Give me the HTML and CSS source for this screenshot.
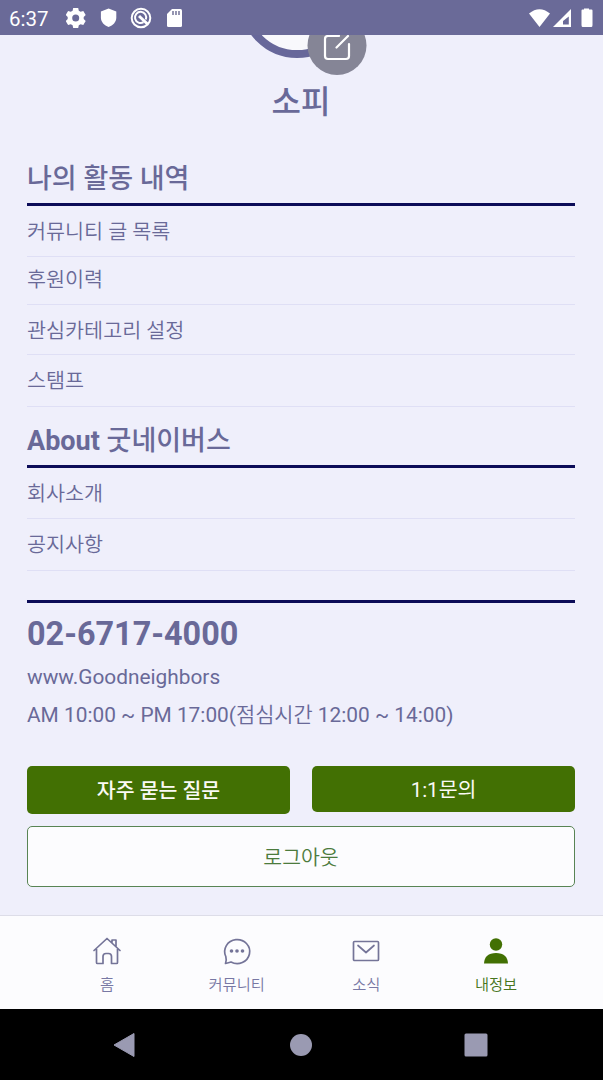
FILE: index.html
```
<!DOCTYPE html>
<html lang="ko">
<head>
<meta charset="utf-8">
<title>내정보</title>
<link rel="stylesheet" href="styles.css">
</head>
<body>
<div class="screen">
  <header class="status">
    <span class="clock">6:37</span>
    <svg class="s-left" width="118" height="22" viewBox="0 0 118 22">
      <g fill="#fff">
        <path fill-rule="evenodd" d="M7.2 1h5l.6 2.8 1.8 1 2.7-.9 2.4 4.1-2 1.9v2.2l2 1.9-2.4 4.1-2.7-.9-1.8 1-.6 2.8h-5l-.6-2.8-1.8-1-2.7.9-2.4-4.1 2-1.9V9.900l-2-1.900 2.400-4.100 2.700.9 1.800-1zM9.700 7.500a3.500 3.500 0 1 0 0 7a3.500 3.500 0 1 0 0-7z"/>
        <path d="M42.600 1.500l7.700 3v6c0 4.500-3.300 8-7.700 9.500c-4.400-1.500-7.700-5-7.700-9.500v-6z"/>
        <path d="M106 2h8.500q1.500 0 1.500 1.500v15q0 1.500-1.500 1.500h-12q-1.500 0-1.500-1.500V7z"/>
      </g>
      <g fill="none" stroke="#fff" stroke-width="2">
        <circle cx="75" cy="11" r="9.300"/><path d="M77.500 15.200A5.600 5.600 0 1 1 79.800 12.500"/>
        <path d="M73 9l8.500 8" stroke-width="3"/>
      </g>
      <path d="M107 4v4M110 4v4M113 4v4" stroke="#6a6a91" stroke-width="1.400"/>
    </svg>
    <svg class="s-right" width="66" height="20" viewBox="0 0 66 20">
      <path fill="#fff" d="M1 5.500Q11.500-3 22 5.500L11.500 19zM61 1.500v-1h-5v1h-1.500q-1 0-1 1V17q0 2 1 2h9q1 0 1-2V2.500q0-1-1-1z"/>
      <path fill="#fff" fill-rule="evenodd" d="M25 19L43 1v18zM35 16.500h5.800V8.500L35 13z"/>
    </svg>
  </header>

  <main class="content">
    <section class="profile">
      <svg class="avatar" width="160" height="44" viewBox="0 0 160 44">
        <circle cx="67" cy="-34" r="53" fill="#f8f8fc" stroke="#67679a" stroke-width="8"/>
        <circle cx="107" cy="10.500" r="29.500" fill="#858596"/>
        <g fill="none" stroke="#fff" stroke-width="2.200" stroke-linecap="round" stroke-linejoin="round">
          <path d="M109 1H98q-3 0-3 3v17q0 3 3 3h18q3 0 3-3V9M106.500 12.500L118 1"/>
        </g>
      </svg>
      <h1 class="name">소피</h1>
    </section>

    <section class="group">
      <h2 class="title">나의 활동 내역</h2>
      <ul class="list">
        <li class="row r1">커뮤니티 글 목록</li>
        <li class="row r2">후원이력</li>
        <li class="row r3">관심카테고리 설정</li>
        <li class="row r4">스탬프</li>
      </ul>
    </section>
    <section class="group second">
      <h2 class="title"><b>About</b> 굿네이버스</h2>
      <ul class="list">
        <li class="row r1">회사소개</li>
        <li class="row r4">공지사항</li>
      </ul>
    </section>

    <section class="contact">
      <p class="phone">02-6717-4000</p>
      <p class="line">www.Goodneighbors</p>
      <p class="line">AM 10:00 ~ PM 17:00(<span class="ko">점심시간</span> 12:00 ~ 14:00)</p>
    </section>

    <div class="actions">
      <button class="btn faq">자주 묻는 질문</button>
      <button class="btn ask">1:1문의</button>
      <button class="btn logout">로그아웃</button>
    </div>
  </main>

  <nav class="tabs">
    <a class="tab"><svg width="30" height="30" viewBox="0 0 30 30" fill="none" stroke="#747498" stroke-width="1.700" stroke-linejoin="round" stroke-linecap="round"><path d="M2 14.500L15 2.500l13 12M4.500 13v13.500q0 1 1 1h5.500v-7q0-3 3-3h2.500q3 0 3 3v7h5q1 0 1-1V13M20 6.500V4h4v6.500"/></svg><span>홈</span></a>
    <a class="tab"><svg width="30" height="30" viewBox="0 0 30 30" fill="none" stroke="#747498" stroke-width="1.700" stroke-linejoin="round"><path d="M3.800 20.500A12.500 12 0 1 1 9 26Q6.500 26.800 3.500 27.500Q4.800 24 3.800 20.500z"/><g fill="#747498" stroke="none"><circle cx="9.500" cy="15" r="1.800"/><circle cx="15" cy="15" r="1.800"/><circle cx="20.500" cy="15" r="1.800"/></g></svg><span>커뮤니티</span></a>
    <a class="tab"><svg width="30" height="30" viewBox="0 0 30 30" fill="none" stroke="#747498" stroke-width="1.700" stroke-linejoin="round" stroke-linecap="round"><rect x="2.500" y="5.500" width="25" height="19" rx="1"/><path d="M7 9.500l8 7 8-7"/></svg><span>소식</span></a>
    <a class="tab active"><svg width="30" height="30" viewBox="0 0 30 30" fill="#427003"><circle cx="15" cy="8.500" r="6.200"/><path d="M3 27.500Q3.500 17 15 17t12 10.500z"/></svg><span>내정보</span></a>
  </nav>
  <footer class="system">
    <svg width="24" height="26" viewBox="0 0 24 26"><path d="M2 13L22 1.500v23z" fill="#9a9ab2" stroke="#9a9ab2" stroke-linejoin="round"/></svg>
    <svg width="24" height="26" viewBox="0 0 24 26"><circle cx="13" cy="13" r="11" fill="#9a9ab2"/></svg>
    <svg width="24" height="26" viewBox="0 0 24 26"><rect x=".5" y="1.500" width="23" height="23" rx="1.500" fill="#9a9ab2"/></svg>
  </footer>
</div>
</body>
</html>
```
FILE: styles.css
```
* { box-sizing: border-box; margin: 0; padding: 0; }
body { font-family: Roboto, "Noto Sans CJK KR", sans-serif; color: #696998; background: #efeffb; }
.screen { width: 603px; height: 1080px; display: flex; flex-direction: column; overflow: hidden; }

.status { height: 35px; flex: none; background: #6a6a98; color: #fff; display: flex; align-items: center; padding: 1px 9px 0; }
.clock { width: 57px; font-size: 20.500px; line-height: 34px; padding-top: 1px; }
.s-right { margin-left: auto; }

.content { flex: 1; padding: 0 28px 0 27px; }
.profile { height: 107px; display: flex; flex-direction: column; align-items: center; }
.avatar { display: block; flex: none; margin-left: 17px; }
.name { font-size: 32px; line-height: 44px; font-weight: 500; padding-top: 1px; }

.title { height: 64px; padding-top: 18px; border-bottom: 3px solid #0c0c58; font-size: 27px; line-height: 39px; font-weight: 500; white-space: nowrap; }
.title b { font-weight: 700; }
.second .title { height: 61px; padding-top: 15px; }
.list { list-style: none; }
.row { display: flex; align-items: center; border-bottom: 1px solid #dfdff5; font-size: 20.700px; font-weight: 350; padding-bottom: 2px; }
.r1 { height: 51px; }
.r2 { height: 48px; padding-bottom: 5px; }
.r3 { height: 50px; }
.r4 { height: 52px; padding-bottom: 3px; }

.contact { margin-top: 29px; border-top: 3px solid #0c0c58; padding-top: 11px; }
.phone { font-size: 32.400px; line-height: 40px; font-weight: 700; }
.line { font-size: 20.850px; line-height: 30px; margin-top: 8px; white-space: nowrap; }
.ko { font-weight: 350; }

.actions { display: grid; grid-template-columns: 1fr 1fr; column-gap: 22px; row-gap: 12px; align-items: start; margin-top: 36px; }
.btn { font: 500 20.500px/28px Roboto, "Noto Sans CJK KR", sans-serif; border: 0; border-radius: 5px; color: #fafaf5; background: #427003; padding-top: 2px; }
.faq { height: 48px; }
.ask { height: 46px; font-weight: 400; }
.logout { grid-column: 1 / -1; height: 61px; background: #fcfcfe; color: #4c7b3d; border: 1.500px solid #588454; font-weight: 350; }

.tabs { height: 94px; flex: none; display: flex; justify-content: center; background: #fcfcfe; border-top: 1px solid #dddde8; }
.tab { width: 129.700px; display: flex; flex-direction: column; align-items: center; padding-top: 20px; font-size: 15.300px; line-height: 22px; font-weight: 350; color: #7878a4; }
.tab svg { display: block; margin-bottom: 8px; }
.active { color: #477520; }
.system { height: 71px; flex: none; background: #000; display: flex; justify-content: space-between; align-items: center; padding: 0 115px 0 112px; }
```
